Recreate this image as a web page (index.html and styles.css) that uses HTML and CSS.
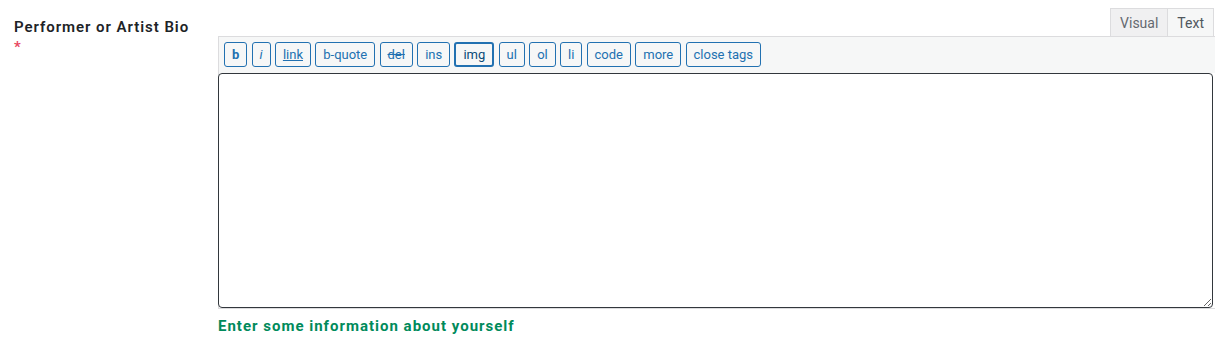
FILE: index.html
```html
<!DOCTYPE html>
<html>
  <head>
    <meta charset="UTF-8" />
    <title>Performer or Artist Bio</title>
    <link rel="stylesheet" href="styles.css">
  </head>
  <body>
    <div class="field-row">
      <div class="field-label">
        <label for="bio">Performer or Artist Bio</label>
        <span class="required">*</span>
      </div>
      <div class="field-input">
        <div class="editor-tabs">
          <button class="tab">Visual</button>
          <button class="tab active">Text</button>
        </div>
        <div class="editor-wrap">
          <div class="quicktags">
            <button class="qt"><b>b</b></button>
            <button class="qt"><i>i</i></button>
            <button class="qt qt-link">link</button>
            <button class="qt">b-quote</button>
            <button class="qt qt-del">del</button>
            <button class="qt">ins</button>
            <button class="qt qt-focus">img</button>
            <button class="qt">ul</button>
            <button class="qt">ol</button>
            <button class="qt">li</button>
            <button class="qt">code</button>
            <button class="qt">more</button>
            <button class="qt">close tags</button>
          </div>
          <textarea id="bio" class="editor-area"></textarea>
        </div>
        <p class="description">Enter some information about yourself</p>
      </div>
    </div>
  </body>
</html>
```

FILE: styles.css
```css
* {
  margin: 0;
  padding: 0;
  box-sizing: border-box;
}
body {
  font-family: Roboto, "Liberation Sans", Arial, sans-serif;
  background: #ffffff;
  color: #1d2327;
}
.field-row {
  display: flex;
  padding: 8px 9px 0 14px;
}
.field-label {
  width: 204px;
  flex-shrink: 0;
  padding-top: 8px;
  display: flex;
  flex-direction: column;
}
.field-label label {
  font-size: 15px;
  font-weight: 600;
  letter-spacing: 0.95px;
  line-height: 22px;
  color: #1d2327;
}
.required {
  color: #e8475f;
  font-size: 15px;
  font-weight: 600;
  line-height: 14px;
  margin-top: 2px;
}
.field-input {
  flex: 1;
}
.editor-tabs {
  display: flex;
  justify-content: flex-end;
  padding-right: 1px;
}
.tab {
  font-family: Roboto, "Liberation Sans", Arial, sans-serif;
  font-size: 14px;
  color: #646970;
  height: 28px;
  padding: 0 9px;
  background: #f0f0f1;
  border: 1px solid #dcdcde;
  border-bottom: none;
  cursor: pointer;
}
.tab.active {
  background: #f6f7f7;
  border-left: none;
  color: #50575e;
}
.editor-wrap {
  border: 1px solid #dcdcde;
  border-right: none;
}
.quicktags {
  display: flex;
  gap: 4.25px;
  background: #f6f7f7;
  padding: 5px 0 5px 5px;
  height: 36px;
}
.qt {
  font-family: Roboto, "Liberation Sans", Arial, sans-serif;
  font-size: 13px;
  color: #2271b1;
  background: #f6f7f7;
  border: 1px solid #2271b1;
  border-radius: 3px;
  height: 25px;
  min-width: 19px;
  padding: 0 7px;
  cursor: pointer;
}
.qt-link {
  text-decoration: underline;
}
.qt-del {
  text-decoration: line-through;
}
.qt-focus {
  color: #0a4b78;
  border: 2px solid #2271b1;
}
.editor-area {
  display: block;
  width: calc(100% - 1px);
  height: 235px;
  border: 1px solid #32373c;
  border-radius: 4px;
  background: #ffffff;
  margin-left: -1px;
  resize: vertical;
}
.description {
  margin-top: 8px;
  font-size: 15px;
  font-weight: 700;
  letter-spacing: 1px;
  color: #008a5b;
}
```
